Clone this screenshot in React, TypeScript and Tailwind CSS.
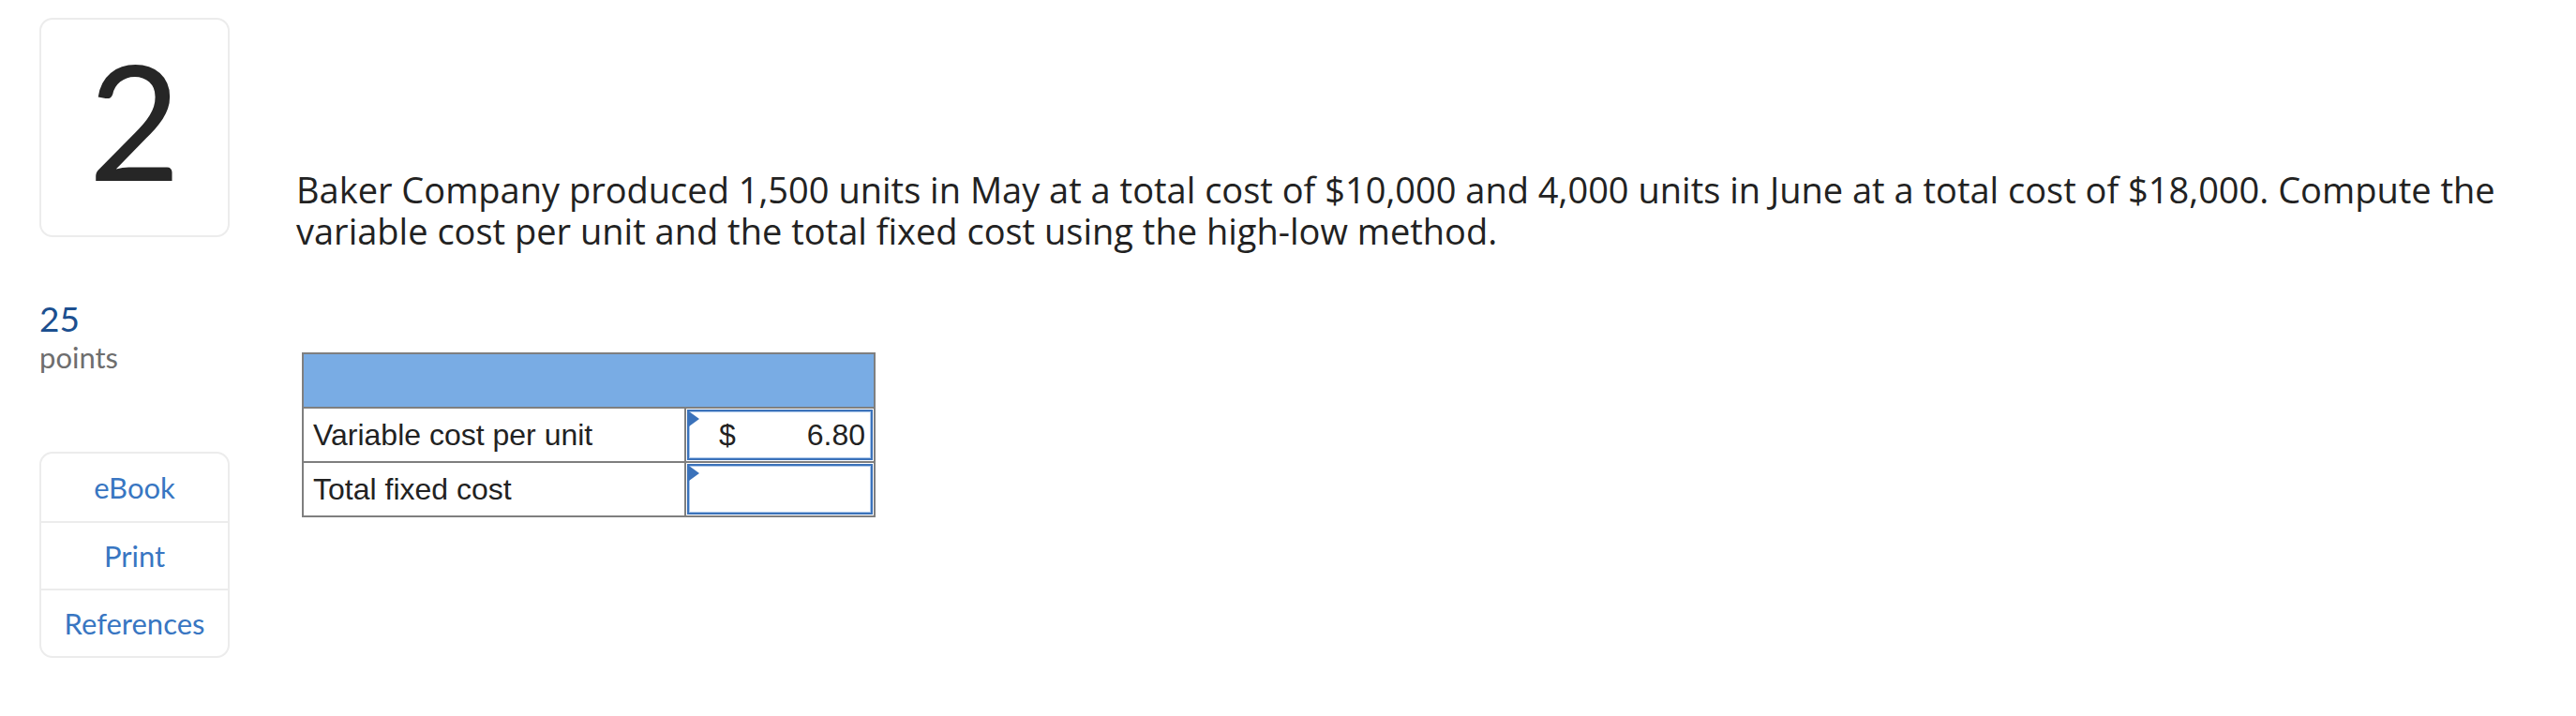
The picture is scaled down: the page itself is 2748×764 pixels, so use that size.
import React from "react"

const rows = [
    { label: "Variable cost per unit", value: "6.80" },
    { label: "Total fixed cost", value: "" },
]

const links = ["eBook", "Print", "References"]

const InputCell = ({ value }: { value: string }) => (
    <div className="relative h-full border-2 border-[#3b72ba] shadow-[inset_0_0_0_1px_#a9c6ea] bg-white flex items-center pl-[18px] pr-[6px]">
        {/* little flag in the corner */}
        <span className="absolute left-0 top-0 w-0 h-0 border-t-[8px] border-b-[8px] border-l-[11px] border-t-transparent border-b-transparent border-l-[#3b72ba]" />
        {value && (
            <>
                <span className="pl-[14px]">$</span>
                <span className="ml-auto">{value}</span>
            </>
        )}
    </div>
)

export default function App() {
    return (
        <main className="w-[2748px] h-[764px] bg-white flex font-['Lato',sans-serif] text-[#222]">
            {/* Left column */}
            <div className="ml-[42px] mt-[19px] w-[203px] flex flex-col">
                <div className="h-[234px] rounded-[14px] border-2 border-[#ececec] flex items-center justify-center">
                    <span className="text-[170px] leading-none text-[#262626] -mt-[18px]">2</span>
                </div>

                <div className="mt-[65px] text-[37px] leading-[44px] text-[#1c4f8f]">25</div>
                <div className="text-[31px] leading-[38px] text-[#6e6e6e]">points</div>

                <div className="mt-[82px] rounded-[14px] border-2 border-[#ececec] flex flex-col">
                    {links.map((link, i) => (
                        <div
                            key={link}
                            className={`h-[72px] flex items-center justify-center text-[31px] text-[#3876c2] ${i > 0 ? "border-t-2 border-[#ececec]" : ""}`}
                        >
                            {link}
                        </div>
                    ))}
                </div>
            </div>

            {/* Question */}
            <div className="ml-[71px] pt-[180px] w-[2390px]">
                <p className="font-['Open_Sans',sans-serif] text-[38px] leading-[44px]">
                    Baker Company produced 1,500 units in May at a total cost of $10,000 and 4,000 units in June at a total cost of $18,000. Compute the variable cost per unit and the total fixed cost using the high-low method.
                </p>

                <div className="mt-[108px] ml-[6px] w-[612px] border-2 border-[#7f7f7f] font-['Liberation_Sans',Arial,sans-serif] text-[32px] text-[#222]">
                    <div className="h-[56px] bg-[#79ace4]" />
                    {rows.map((row) => (
                        <div key={row.label} className="flex h-[58px] border-t-2 border-[#7f7f7f]">
                            <div className="w-[408px] border-r-2 border-[#7f7f7f] flex items-center pl-[10px]">
                                {row.label}
                            </div>
                            <div className="flex-1 p-[1px]">
                                <InputCell value={row.value} />
                            </div>
                        </div>
                    ))}
                </div>
            </div>
        </main>
    )
}
